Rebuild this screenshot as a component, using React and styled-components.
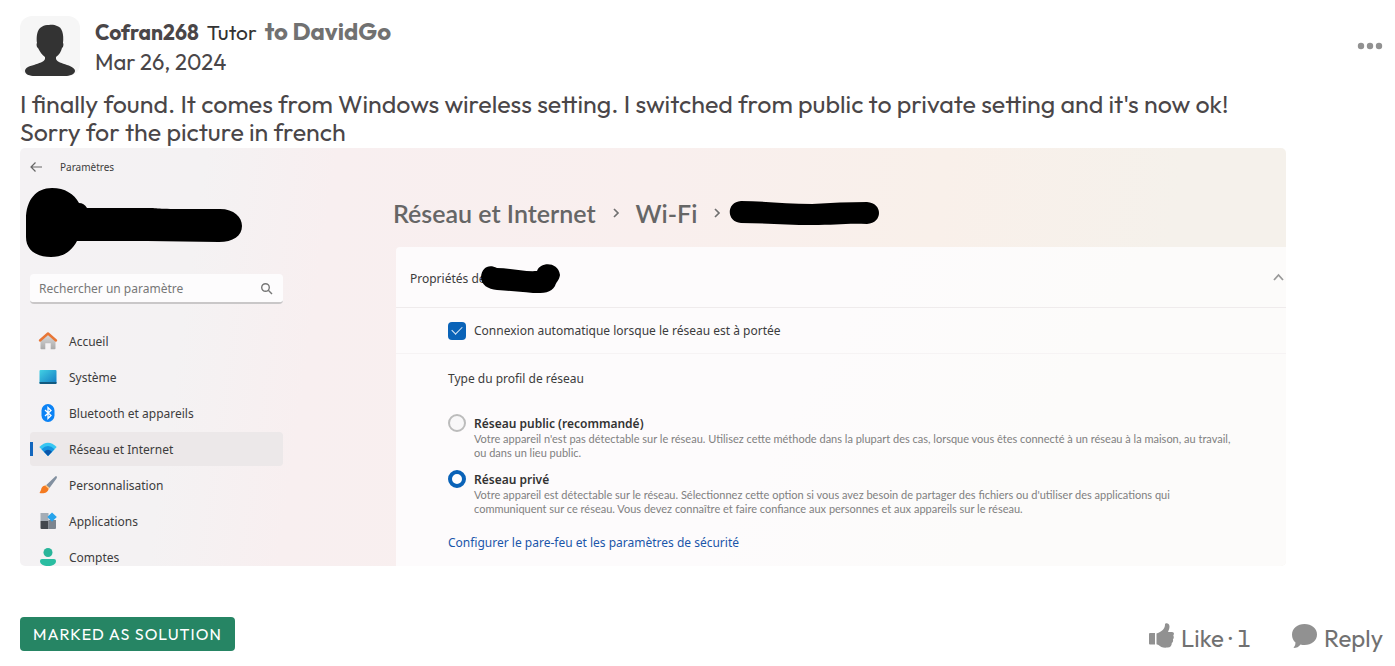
import React from "react";
import styled, { createGlobalStyle, css } from "styled-components";

const Global = createGlobalStyle`
  * { box-sizing: border-box; }
  body { margin: 0; background: #fff; font-family: Outfit, Lato, sans-serif; color: #4a4648; }
  button { font: inherit; color: inherit; background: none; border: 0; padding: 0; cursor: pointer; }
  a { text-decoration: none; color: inherit; }
`;

const Post = styled.article`
  padding: 16px 12px 12px 20px;
`;
const PostHeader = styled.header`
  display: flex;
  align-items: center;
  gap: 15px;
  height: 60px;
`;
const Avatar = styled.svg`
  width: 60px;
  height: 60px;
  flex: none;
  border-radius: 12px;
  background: #f6f6f6;
`;
const Byline = styled.div`
  flex: 1;
  font-size: 22px;
  line-height: 30px;
`;
const NameRow = styled.div`
  display: flex;
  gap: 8px;
  align-items: baseline;
`;
const Author = styled.a`
  font-size: 21px;
  font-weight: 700;
`;
const Rank = styled.span`
  font-size: 21px;
  color: #333;
`;
const Recipient = styled.a`
  font-size: 24px;
  font-weight: 700;
  color: #717171;
`;
const MoreButton = styled.button`
  display: flex;
  svg { width: 26px; height: 12px; }
`;
const Message = styled.p`
  margin: 14px 0 2px;
  font-size: 25px;
  line-height: 28px;
`;

const Shot = styled.section`
  display: grid;
  grid-template-columns: 272px minmax(0, 1fr);
  column-gap: 101px;
  max-width: 1266px;
  aspect-ratio: 633 / 209;
  overflow: hidden;
  border-radius: 5px;
  background: linear-gradient(98deg, #f4f2f4 0%, #f4f2f3 14%, #f8eff0 24%, #f9efee 48%, #f9f0ea 70%, #f5f1eb 88%);
  font-family: "Segoe UI", "Noto Sans", "Open Sans", sans-serif;
  font-size: 12px;
  color: #3c3c3c;
`;
const Sidebar = styled.aside`
  min-width: 0;
  min-height: 0;
  padding: 10px 9px 0 5px;
`;
const TopBar = styled.div`
  display: flex;
  align-items: center;
  gap: 18px;
  height: 18px;
  padding-left: 5px;
  font-size: 10px;
  svg { width: 12px; height: 12px; }
`;
const AccountMark = styled.svg`
  display: block;
  width: 218px;
  height: 72px;
  margin-top: 11px;
`;
const SearchBox = styled.label`
  display: flex;
  align-items: center;
  height: 30px;
  margin: 15px 0 0 5px;
  padding: 0 10px 0 9px;
  border-radius: 4px;
  border-bottom: 2px solid #c9c7c8;
  background: #fdfcfd;
  svg { width: 13px; height: 13px; }
`;
const SearchInput = styled.input`
  flex: 1;
  min-width: 0;
  border: 0;
  padding: 0;
  outline: 0;
  background: none;
  font: inherit;
  &::placeholder { color: #777; opacity: 1; }
`;
const Nav = styled.nav`
  display: grid;
  gap: 2px;
  margin: 20px 0 0 5px;
`;
const NavItem = styled.a`
  display: flex;
  align-items: center;
  gap: 11px;
  height: 34px;
  padding-left: 5px;
  border-radius: 4px;
  border-left: 3px solid transparent;
  ${(p) => p.$active && css`
    background: linear-gradient(#1266bd, #1266bd) left center / 3px 14px no-repeat, #ece8e9;
    background-origin: border-box;
  `}
  svg { width: 20px; height: 20px; flex: none; }
`;

const Main = styled.div`
  min-width: 0;
  min-height: 0;
  padding-top: 48px;
`;
const Breadcrumb = styled.nav`
  display: flex;
  align-items: center;
  height: 34px;
  font-family: "Segoe UI", Lato, sans-serif;
  font-size: 25px;
  font-weight: 600;
  color: #666;
  svg { flex: none; }
`;
const Chevron = styled.svg`
  width: 8px;
  height: 12px;
  margin: 0 ${(p) => p.$after}px 0 17px;
`;
const NetworkMark = styled.svg`
  width: 150px;
  height: 26px;
`;
const Card = styled.div`
  margin: 17px 0 0 3px;
  height: 330px;
  background: linear-gradient(120deg, #fdfbfc 0%, #fdfbfc 45%, #fcfbfa 70%);
  border-radius: 4px 0 0 0;
`;
const CardHeader = styled.button`
  display: flex;
  align-items: center;
  width: 100%;
  height: 61px;
  padding: 3px 1px 0 14px;
  border-bottom: 1px solid #efebec;
  text-align: left;
`;
const PropertyMark = styled.svg`
  width: 81px;
  height: 31px;
  margin: 0 auto 0 -6px;
`;
const Caret = styled.svg`
  width: 13px;
  height: 8px;
  margin-bottom: 4px;
`;
const AutoRow = styled.label`
  display: flex;
  align-items: center;
  gap: 8px;
  height: 46px;
  padding-left: 52px;
  border-bottom: 1px solid #f6f3f4;
`;
const Check = styled.input`
  appearance: none;
  width: 18px;
  height: 18px;
  margin: 0;
  border-radius: 4px;
  background: #0a63b8;
  display: grid;
  place-items: center;
  &:checked::after {
    content: "";
    width: 9px;
    height: 5px;
    margin-bottom: 3px;
    border: solid #dcebf8;
    border-width: 0 0 1px 1px;
    transform: rotate(-45deg);
  }
`;
const Profile = styled.fieldset`
  margin: 0;
  border: 0;
  padding: 16px 0 0 52px;
`;
const Legend = styled.legend`
  float: left;
  width: 100%;
  padding: 0;
  margin-bottom: 26px;
  line-height: 18px;
`;
const Option = styled.label`
  clear: both;
  display: grid;
  grid-template-columns: 18px minmax(0, 1fr);
  column-gap: 8px;
  margin-bottom: 10px;
`;
const Radio = styled.input`
  appearance: none;
  width: 18px;
  height: 18px;
  margin: 0;
  border-radius: 50%;
  border: 2px solid #bcbcbc;
  background: #f8f7f8;
  &:checked { border: 4px solid #0a63b8; background: #fff; }
`;
const OptionTitle = styled.strong`
  display: block;
  padding-top: 2px;
  font-weight: 600;
  line-height: 16px;
  color: #333;
`;
const OptionText = styled.span`
  display: block;
  font-family: "Segoe UI", Lato, sans-serif;
  font-size: 11px;
  line-height: 14px;
  color: #808080;
  white-space: nowrap;
`;
const SecurityLink = styled.a`
  display: inline-block;
  margin-top: 8px;
  line-height: 18px;
  color: #1a56aa;
`;

const PostFooter = styled.footer`
  display: flex;
  align-items: center;
  margin-top: 49px;
  color: #717171;
`;
const Badge = styled.span`
  height: 34px;
  padding: 0 13px;
  border-radius: 4px;
  background: #268564;
  color: #fff;
  font-size: 16px;
  line-height: 34px;
  letter-spacing: 1px;
  text-transform: uppercase;
`;
const Actions = styled.div`
  display: flex;
  gap: 41px;
  margin-left: auto;
  padding-top: 8px;
`;
const Action = styled.button`
  display: flex;
  align-items: center;
  gap: 7px;
  font-size: 24px;
  line-height: 28px;
  font-variant-numeric: tabular-nums;
  svg { width: 25px; height: 25px; margin-bottom: 4px; }
`;

function Arrow({ after }) {
  return (
    <Chevron $after={after} viewBox="0 0 8 12" fill="none" stroke="#707070" strokeWidth="1.7" aria-hidden="true">
      <path d="M1 2l4 4-4 4" />
    </Chevron>
  );
}

const icons = {
  home: (
    <svg viewBox="0 0 19 20">
      <defs><linearGradient id="wall" x2="0" y2="1"><stop stopColor="#ddd" /><stop offset="1" stopColor="#a9a9a9" /></linearGradient></defs>
      <path fill="url(#wall)" d="M2 9l7.500-6.500L17 9v8.500q0 .8-.8.800h-4v-6H6.800v6h-4q-.8 0-.8-.8z" />
      <path d="M1.500 9.500L9.500 2.500 17.500 9.500" fill="none" stroke="#e87636" strokeWidth="2.400" strokeLinecap="round" strokeLinejoin="round" />
    </svg>
  ),
  system: (
    <svg viewBox="0 0 19 20">
      <defs><linearGradient id="screen" x2="1" y2="1"><stop stopColor="#42d1e4" /><stop offset="1" stopColor="#1279c2" /></linearGradient></defs>
      <rect x="1" y="3" width="17" height="14" rx="1" fill="url(#screen)" />
      <path d="M1 15h17v1q0 1-1 1H2q-1 0-1-1z" fill="#125a80" />
    </svg>
  ),
  bluetooth: (
    <svg viewBox="0 0 19 20">
      <rect x="3" y="1" width="13" height="18" rx="6.500" fill="#0b83f5" />
      <path d="M6.500 7l6 5.500-3 3V4.500l3 3-6 5.500" fill="none" stroke="#fff" strokeWidth="1.300" />
    </svg>
  ),
  network: (
    <svg viewBox="0 0 19 20">
      <path d="M.8 8Q9.500-.5 18.200 8L9.500 17z" fill="#37c6f2" />
      <path d="M3 10.200Q9.500 4 16 10.200L9.500 17z" fill="#1794e0" />
      <path d="M5.500 12.800Q9.500 8.500 13.500 12.800L9.500 17z" fill="#0a56aa" />
    </svg>
  ),
  brush: (
    <svg viewBox="0 0 19 20">
      <path d="M18 1.200q1 .8 0 2.200l-7 9.600-3.500-2.800 9-8.500q.8-.8 1.500-.5z" fill="#8290a0" />
      <path d="M6.800 10.500c-3 .5-3.800 2-4.300 4.500L1 18c4 1 8.500 0 9.200-4.500z" fill="#f47a20" />
      <path d="M7 10.300l3.700 3.200" stroke="#ffc078" strokeWidth="1.300" />
    </svg>
  ),
  apps: (
    <svg viewBox="0 0 19 20">
      <path d="M2 2h8v8H2z" fill="#a5adb6" /><path d="M2 10h8v8H3q-1 0-1-1z" fill="#43484e" />
      <path d="M10 9h7.500v8q0 1-1 1H10z" fill="#7c858f" /><path d="M13.500 1.500L18.300 6l-4.800 4.800L8.800 6z" fill="#27a4ec" />
    </svg>
  ),
  account: (
    <svg viewBox="0 0 19 20">
      <circle cx="9.500" cy="5.500" r="4.500" fill="#29b59a" />
      <path d="M3.500 12h12q2 0 2 2c0 3.500-3.500 5-8 5s-8-1.500-8-5q0-2 2-2z" fill="#2abda1" />
    </svg>
  ),
};

const navItems = [
  ["home", "Accueil"],
  ["system", "Système"],
  ["bluetooth", "Bluetooth et appareils"],
  ["network", "Réseau et Internet"],
  ["brush", "Personnalisation"],
  ["apps", "Applications"],
  ["account", "Comptes"],
];

function SettingsShot() {
  return (
    <Shot aria-label="Paramètres Windows">
      <Sidebar>
        <TopBar>
          <svg viewBox="0 0 12 12" fill="none" stroke="#666" strokeWidth="1.200"><path d="M12 6H1M5.500 1.500L1 6l4.500 4.500" /></svg>
          <span>Paramètres</span>
        </TopBar>
        <AccountMark viewBox="0 0 218 72" aria-hidden="true">
          <path d="M1 32C1 13 11 1 27 1c13 0 22 6 27 15q5 0 8 5c25 0 45 0 66 0 8 1 16 1 67 1 14 0 22 8 22 17 0 10-9 16-23 16-49-1-95-1-142-1C46 65 38 70 26 70 10 70 1 62 1 50z" />
        </AccountMark>
        <SearchBox>
          <SearchInput type="text" placeholder="Rechercher un paramètre" aria-label="Rechercher un paramètre" />
          <svg viewBox="0 0 13 13" fill="none" stroke="#777" strokeWidth="1.400"><circle cx="5.500" cy="5.500" r="3.800" /><path d="M8.300 8.300L12 12" /></svg>
        </SearchBox>
        <Nav>
          {navItems.map(([icon, label]) => (
            <NavItem key={icon} href="#" $active={icon === "network"}>{icons[icon]}{label}</NavItem>
          ))}
        </Nav>
      </Sidebar>
      <Main>
        <Breadcrumb>
          <a href="#">Réseau et Internet</a>
          <Arrow after={15} />
          <a href="#">Wi-Fi</a>
          <Arrow after={7} />
          <NetworkMark viewBox="0 0 150 26" aria-hidden="true">
            <path d="M12 1C33 1 57 4 83 4q28-2 55-2c16 1 16 21 0 22-20-1-32 1-55 1-25 0-49-2-71-2C-3 22-3 2 12 1z" />
          </NetworkMark>
        </Breadcrumb>
        <Card>
          <CardHeader>
            <span>Propriétés de</span>
            <PropertyMark viewBox="0 0 81 31" aria-hidden="true">
              <path d="M1 14C2 4 9 1 17 5c14 0 27 4 40 3C60-1 78-2 80 12c-1 6-4 7-5 11-4 7-11 7-22 7-14-1-22-2-36-3C8 26 1 22 1 14z" />
            </PropertyMark>
            <Caret viewBox="0 0 13 8" fill="none" stroke="#999" strokeWidth="1.800"><path d="M2 7l4.500-5L11 7" /></Caret>
          </CardHeader>
          <AutoRow>
            <Check type="checkbox" defaultChecked />
            Connexion automatique lorsque le réseau est à portée
          </AutoRow>
          <Profile>
            <Legend>Type du profil de réseau</Legend>
            <Option>
              <Radio type="radio" name="profile" />
              <span>
                <OptionTitle>Réseau public (recommandé)</OptionTitle>
                <OptionText>
                  Votre appareil n'est pas détectable sur le réseau. Utilisez cette méthode dans la plupart des cas, lorsque vous êtes connecté à un réseau à la maison, au travail,<br />
                  ou dans un lieu public.
                </OptionText>
              </span>
            </Option>
            <Option>
              <Radio type="radio" name="profile" defaultChecked />
              <span>
                <OptionTitle>Réseau privé</OptionTitle>
                <OptionText>
                  Votre appareil est détectable sur le réseau. Sélectionnez cette option si vous avez besoin de partager des fichiers ou d'utiliser des applications qui<br />
                  communiquent sur ce réseau. Vous devez connaître et faire confiance aux personnes et aux appareils sur le réseau.
                </OptionText>
              </span>
            </Option>
            <SecurityLink href="#">Configurer le pare-feu et les paramètres de sécurité</SecurityLink>
          </Profile>
        </Card>
      </Main>
    </Shot>
  );
}

export default function App() {
  return (
    <>
      <Global />
      <Post>
        <PostHeader>
          <Avatar viewBox="0 0 60 60" aria-hidden="true">
            <path fill="#333" d="M17 27c-1-10 1-18 12-18 3-.5 6 0 8 1 5 1 7 8 6 17 1 1 0 5-1 5-1 4-3 7-6 9v2c1 3 6 4 11 6 5 1.500 8 3.500 8 6 0 3-5 5-10 5H15C9 60 5 58 5 55c0-3 4-5 9-6 5-2 10-3 11-6v-2c-3-2-5-5-7-9-1 0-2-4-1-5z" />
          </Avatar>
          <Byline>
            <NameRow>
              <Author href="#">Cofran268</Author>
              <Rank>Tutor</Rank>
              <Recipient href="#">to DavidGo</Recipient>
            </NameRow>
            <time dateTime="2024-03-26">Mar 26, 2024</time>
          </Byline>
          <MoreButton aria-label="More options">
            <svg viewBox="0 0 26 12" fill="#919191"><circle cx="4" cy="6" r="3.200" /><circle cx="13" cy="6" r="3.200" /><circle cx="22" cy="6" r="3.200" /></svg>
          </MoreButton>
        </PostHeader>
        <Message>
          I finally found. It comes from Windows wireless setting. I switched from public to private setting and it's now ok!<br />
          Sorry for the picture in french
        </Message>
        <SettingsShot />
        <PostFooter>
          <Badge>Marked as solution</Badge>
          <Actions>
            <Action>
              <svg viewBox="0 0 25 25" fill="#919191"><path d="M1 10h5v11.500H1q-1 0-1-1V11q0-1 1-1zM7.500 10.500c6-2 8.500-5 8.500-9 0-2 4.500-2 4.500 2 0 2-.7 3.500-1.500 5.500H23c2 0 2.500 2 1.300 3.500.9 1.500.5 3-.4 3.800.5 1.500 0 3-1.100 3.700 0 2.500-1.300 4.500-4.300 4.500-4.500.5-7-.5-9-2.500l-2-.7z" /></svg>
              <span>Like · 1</span>
            </Action>
            <Action>
              <svg viewBox="0 0 25 25" fill="#919191"><path d="M12.500 1C19.500 1 25 5.500 25 11.500S19.500 22 12.500 22q-2 0-4-.5Q6 25 1.500 25q2.300-3 2-5.500Q0 16.500 0 11.500C0 5.500 5.500 1 12.500 1z" /></svg>
              <span>Reply</span>
            </Action>
          </Actions>
        </PostFooter>
      </Post>
    </>
  );
}
